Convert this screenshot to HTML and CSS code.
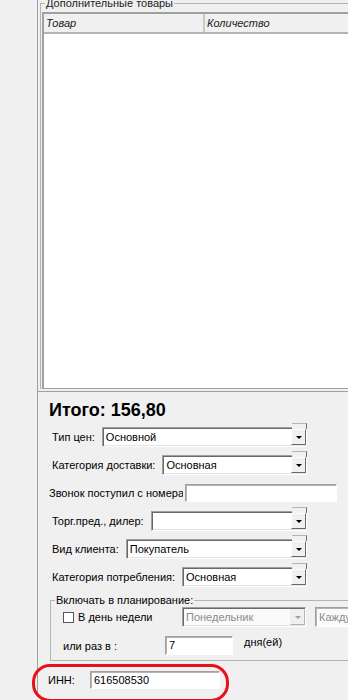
FILE: index.html
```html
<!DOCTYPE html>
<html lang="ru">
<head>
<meta charset="UTF-8">
<meta name="viewport" content="width=device-width, initial-scale=1.0">
<title>Заказ клиента</title>
<link rel="stylesheet" href="styles.css">
</head>
<body>
    <div class="window">
        <fieldset class="goods">
            <legend>Дополнительные товары</legend>
            <div class="list">
                <div class="list-head">
                    <div class="col col-name">Товар</div>
                    <div class="col">Количество</div>
                </div>
            </div>
        </fieldset>

        <div class="form">
            <div class="total">Итого: 156,80</div>

            <div class="row">
                <span class="label">Тип цен:</span>
                <div class="combo"><span class="value">Основной</span><span class="drop"></span></div>
            </div>
            <div class="row">
                <span class="label">Категория доставки:</span>
                <div class="combo"><span class="value">Основная</span><span class="drop"></span></div>
            </div>
            <div class="row row-phone">
                <span class="label label-cut">Звонок поступил с номера:</span>
                <div class="edit edit-phone"></div>
            </div>
            <div class="row">
                <span class="label">Торг.пред., дилер:</span>
                <div class="combo"><span class="value"></span><span class="drop"></span></div>
            </div>
            <div class="row">
                <span class="label">Вид клиента:</span>
                <div class="combo"><span class="value">Покупатель</span><span class="drop"></span></div>
            </div>
            <div class="row">
                <span class="label">Категория потребления:</span>
                <div class="combo"><span class="value">Основная</span><span class="drop"></span></div>
            </div>

            <fieldset class="plan">
                <legend>Включать в планирование:</legend>
                <div class="plan-row">
                    <span class="check"></span>
                    <span class="plan-label">В день недели</span>
                    <div class="combo combo-off"><span class="value">Понедельник</span><span class="drop"></span></div>
                    <div class="edit edit-off">Каждую неделю</div>
                </div>
                <div class="plan-row plan-row-every">
                    <span class="plan-label plan-label-every">или раз в :</span>
                    <div class="edit edit-days">7</div>
                    <span class="days">дня(ей)</span>
                </div>
            </fieldset>

            <div class="inn-row">
                <span class="inn-label">ИНН:</span>
                <div class="edit edit-inn">616508530</div>
                <span class="mark"></span>
            </div>
        </div>
    </div>
</body>
</html>
```

FILE: styles.css
```css
body {
    margin: 0;
    padding: 0;
    height: 700px;
    overflow: hidden;
    background-color: #f0f0f0;
    font-family: "Liberation Sans", Arial, sans-serif;
    font-size: 11px;
    color: #000;
}
.window {
    margin-left: 37px;
    width: 400px;
    height: 700px;
    border-left: 1px solid #a0a0a0;
}
.goods {
    margin: -3px 0 0 2px;
    padding: 3px 0 0 1px;
    border: 1px solid #b4b4b4;
    border-bottom: none;
    border-right: none;
}
.goods legend {
    padding: 0 1px;
    margin-left: 3px;
    line-height: 12px;
    color: #222;
}
.list {
    height: 377px;
    background-color: #fff;
    border-top: 2px solid #a0a0a0;
    border-left: 2px solid #a0a0a0;
    border-bottom: 1px solid #a0a0a0;
    box-sizing: border-box;
}
.list-head {
    display: flex;
    height: 20px;
    background-color: #f0f0f0;
    border-bottom: 2px solid #b4b4b4;
    box-sizing: border-box;
}
.col {
    padding-left: 2px;
    line-height: 18px;
    font-style: italic;
    color: #222;
}
.col-name {
    width: 157px;
    border-right: 2px solid #c8c8c8;
}
.form {
    margin-top: 2px;
    border-top: 1px solid #a0a0a0;
    padding-top: 8px;
    position: relative;
}
.total {
    padding-left: 11px;
    font-size: 18px;
    font-weight: bold;
    line-height: 20px;
    margin-bottom: 3px;
}
.row {
    display: flex;
    align-items: center;
    gap: 7px;
    height: 28px;
    padding-left: 14px;
    width: 255px;
}
.row-phone {
    padding-left: 11px;
    width: 288px;
    gap: 2px;
}
.label {
    white-space: nowrap;
    flex: none;
}
.label-cut {
    width: 134px;
    overflow: hidden;
}
.combo {
    position: relative;
    flex: 1;
    display: flex;
    height: 20px;
    background-color: #fff;
    border: 1px solid;
    border-color: #a0a0a0 #fff #fff #a0a0a0;
    box-shadow: inset 1px 1px 0 #696969, inset -1px -1px 0 #e3e3e3;
    box-sizing: border-box;
}
.value {
    flex: 1;
    padding-left: 3px;
    line-height: 18px;
    white-space: nowrap;
    overflow: hidden;
}
.drop {
    position: relative;
    width: 15px;
    margin: 1px 0 1px 0;
    background-color: #f0f0f0;
    border: 1px solid;
    border-color: #fff #696969 #696969 #fff;
    box-sizing: border-box;
    display: flex;
    align-items: center;
    justify-content: center;
}
.drop::before {
    content: "";
    position: absolute;
    top: -7px;
    left: 0;
    right: -2px;
    height: 5px;
    background-color: #f0f0f0;
    border-top: 1px solid #b4b4b4;
    border-right: 1px solid #696969;
}
.drop::after {
    content: "";
    border-left: 3px solid transparent;
    border-right: 3px solid transparent;
    border-top: 3px solid #000;
    margin-top: 1px;
}
.edit {
    height: 19px;
    background-color: #fff;
    border: 1px solid;
    border-color: #a0a0a0 #fff #fff #a0a0a0;
    box-shadow: inset 1px 1px 0 #b4b4b4;
    box-sizing: border-box;
    padding-left: 3px;
    line-height: 17px;
    white-space: nowrap;
    overflow: hidden;
}
.edit-phone {
    flex: 1;
    height: 18px;
}
.plan {
    margin: 3px 0 0 12px;
    padding: 0 0 5px 4px;
    width: 400px;
    border: 1px solid #b4b4b4;
    border-right: none;
}
.plan legend {
    padding: 0 1px;
    line-height: 13px;
}
.plan-row {
    display: flex;
    align-items: center;
    height: 20px;
}
.check {
    width: 11px;
    height: 11px;
    margin: 0 4px 0 8px;
    background-color: #fff;
    border: 1px solid #555;
    box-sizing: border-box;
}
.plan-label {
    width: 104px;
    flex: none;
}
.plan-label-every {
    width: 102px;
    margin-left: 8px;
}
.combo-off {
    flex: none;
    width: 124px;
    background-color: #fafafa;
    color: #8c8c8c;
}
.combo-off .drop::before {
    display: none;
}
.combo-off .drop {
    border-color: #f0f0f0 #b4b4b4 #b4b4b4 #f0f0f0;
}
.combo-off .drop::after {
    border-top-color: #a0a0a0;
}
.edit-off {
    width: 90px;
    height: 20px;
    margin-left: 9px;
    color: #8c8c8c;
    background-color: #fafafa;
    line-height: 18px;
}
.plan-row-every {
    margin-top: 9px;
    height: 19px;
}
.edit-days {
    width: 68px;
}
.days {
    margin-left: 11px;
    align-self: flex-start;
    line-height: 12px;
}
.inn-row {
    position: relative;
    display: flex;
    align-items: center;
    height: 18px;
    margin-top: 10px;
    padding-left: 10px;
}
.inn-label {
    width: 42px;
}
.edit-inn {
    width: 130px;
    height: 18px;
}
.mark {
    position: absolute;
    left: -6px;
    top: -7px;
    width: 197px;
    height: 38px;
    border: 3px solid #e8101a;
    border-radius: 18px;
    box-sizing: border-box;
}
```
